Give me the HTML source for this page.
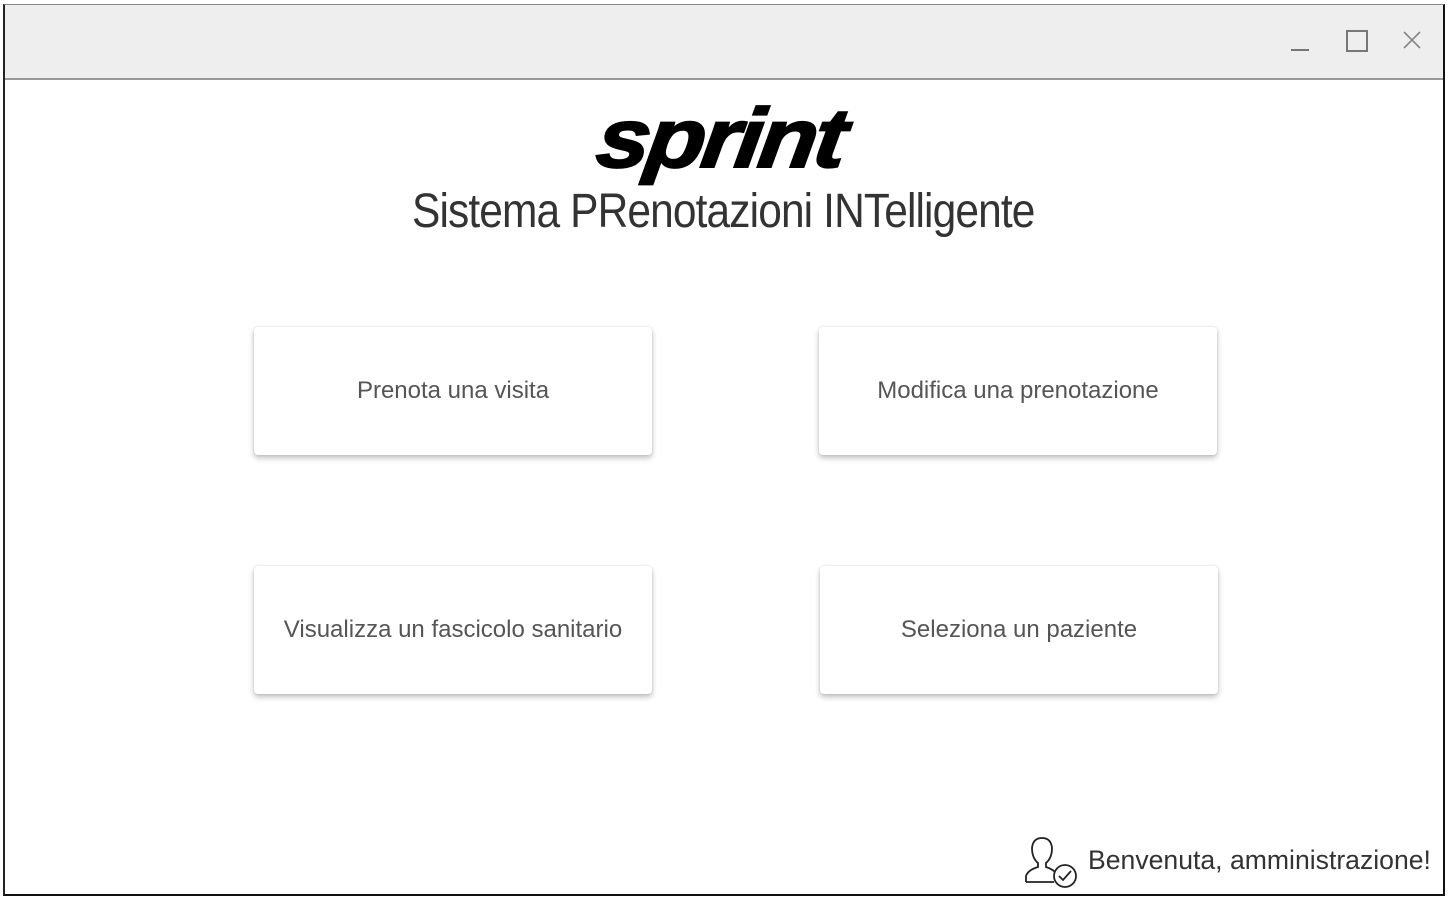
<!DOCTYPE html>
<html><head><meta charset="utf-8"><style>
body{margin:0;width:1456px;height:902px;background:#fff;position:relative;overflow:hidden;font-family:"Liberation Sans",sans-serif}
.win{position:absolute;left:3px;top:4px;width:1442px;height:892px;border:1px solid #888;border-right:2px solid #111;border-bottom:2px solid #111;border-left:2px solid #222;box-sizing:border-box}
.bar{position:absolute;left:0;top:0;right:0;height:73px;background:#eeeeee;border-bottom:2px solid #999}
.card{position:absolute;width:398px;height:128px;background:#fff;border-radius:4px;box-shadow:0 3px 6px rgba(0,0,0,.25),0 0 2px rgba(0,0,0,.12);display:flex;align-items:center;justify-content:center;font-size:24px;color:#555}
.logo{position:absolute;left:598px;top:90px;font-size:84px;font-weight:bold;font-style:italic;letter-spacing:-3px;color:#000;transform:skewX(-8deg) scaleX(1.14);transform-origin:left;-webkit-text-stroke:2px #000}
.title{position:absolute;left:412px;top:184px;font-size:48px;color:#333;transform:scaleX(0.885);transform-origin:left;white-space:nowrap;letter-spacing:-1px}
</style></head><body>
<div class="win"><div class="bar">
<svg style="position:absolute;left:1280px;top:20px" width="150" height="34">
<line x1="6" y1="25" x2="24" y2="25" stroke="#777" stroke-width="2"/>
<rect x="62" y="6" width="20" height="20" fill="none" stroke="#777" stroke-width="2"/>
<path d="M119 7 L135 23 M135 7 L119 23" stroke="#888" stroke-width="1.6"/>
</svg></div></div>
<div class="logo">sprint</div>
<div class="title">Sistema PRenotazioni INTelligente</div>
<div class="card" style="left:254px;top:327px">Prenota una visita</div>
<div class="card" style="left:819px;top:327px">Modifica una prenotazione</div>
<div class="card" style="left:254px;top:566px">Visualizza un fascicolo sanitario</div>
<div class="card" style="left:820px;top:566px">Seleziona un paziente</div>
<svg style="position:absolute;left:1022px;top:836px" width="58" height="54" fill="none" stroke="#222" stroke-width="1.8">
<path d="M4 46 L4 40 Q6 34 16 31 L16 27 Q10 22 10 12 Q11 2 20 2 Q29 2 30 12 Q30 22 24 27 L24 31 Q30 33 33 36"/>
<path d="M4 46 L32 46"/>
<circle cx="43" cy="40" r="11"/>
<path d="M37 40 L41 44 L49 35"/>
</svg>
<div style="position:absolute;left:1088px;top:845px;font-size:26.6px;color:#333">Benvenuta, amministrazione!</div>
</body></html>
